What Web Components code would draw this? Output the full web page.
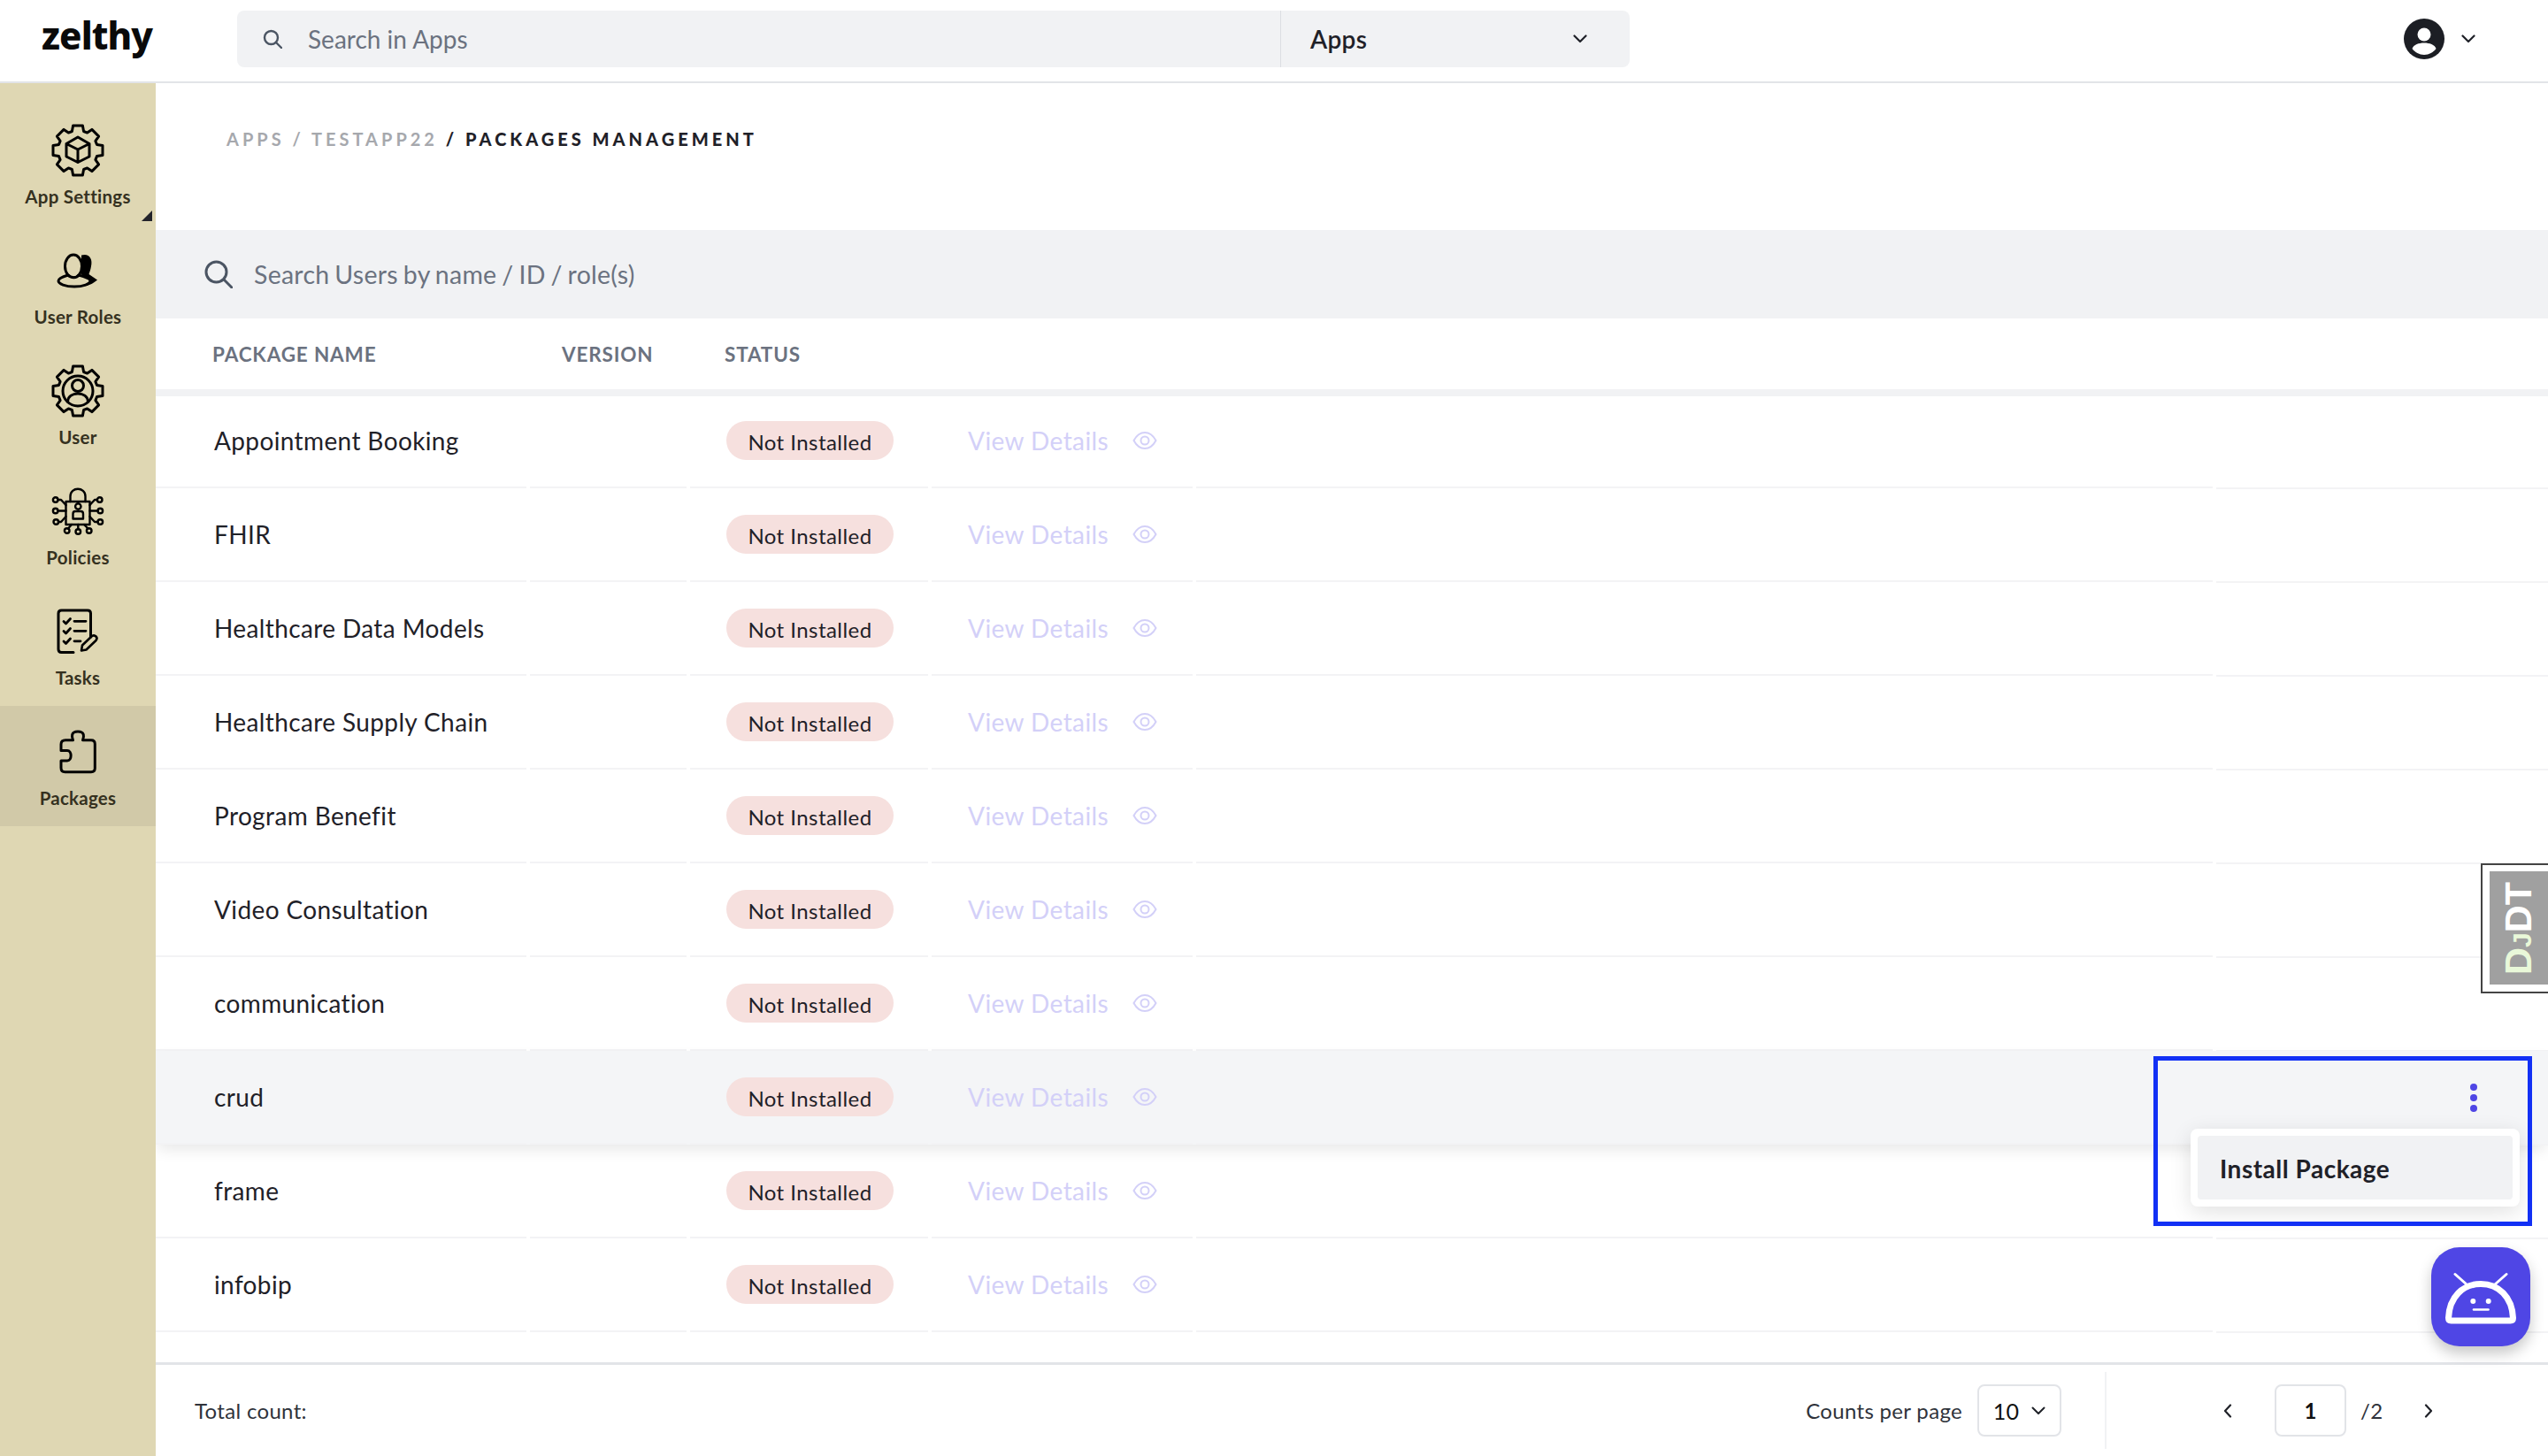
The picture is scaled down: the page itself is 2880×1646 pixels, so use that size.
<!DOCTYPE html>
<html lang="en">
<head>
<meta charset="utf-8">
<title>Packages Management</title>
<style>
  html, body { margin: 0; padding: 0; background: #fff; }
  body { font-family: Lato, "Liberation Sans", sans-serif; }
</style>
</head>
<body>
<z-app></z-app>
<script>
// 8 tooth gear outline, used by App Settings and User
function gearPath(cx, cy, R, r) {
  const pts = [];
  for (let i = 0; i < 8; i++) {
    const a = -90 + i * 45;
    [[-17, r], [-11, R], [11, R], [17, r]].forEach(([d, rad]) => {
      const t = (a + d) * Math.PI / 180;
      pts.push((cx + rad * Math.cos(t)).toFixed(1) + ' ' + (cy + rad * Math.sin(t)).toFixed(1));
    });
  }
  return 'M' + pts.join('L') + 'Z';
}

const ICONS = {
  app: `<path d="${gearPath(32, 32, 28.5, 22.5)}"/><path d="M32 17 45 24.5V39L32 45.5 19 39V24.5ZM19 24.5 32 31 45 24.5M32 31V45.5"/>`,
  roles: `<path fill="#000" stroke="none" d="M36 14.5C45 12 49 19 47 27 46.500 31 45 34 44.500 36L54 42.500C50 46 46 48 42 49L36 36Z"/><ellipse cx="27" cy="27" rx="9.500" ry="13"/><path fill="#dfd7b3" d="M21 37C14 39 10 41 10 43.500 10 47 18 50 28 50 38 50 46 47 46 43.500 46 41 40 39 33 37 31 40.500 24 40.500 21 37Z"/>`,
  user: `<path d="${gearPath(32, 32, 28.5, 22.5)}"/><circle cx="32" cy="32" r="17"/><circle cx="32" cy="26" r="6.500"/><path d="M20.500 44C21 38 26 35 32 35S43 38 43.500 44"/>`,
  policies: `<g stroke-width="2.400"><rect x="18.500" y="21" width="27" height="26"/><path d="M23.500 21V15C23.500 4 40.500 4 40.500 15V21"/><circle cx="32.300" cy="26.500" r="3.200"/><path d="M26.500 40.500V35Q26.500 32 29 32H35.500Q38 32 38 35V40.500Z"/>
    <circle cx="6.700" cy="19" r="2.800"/><circle cx="6.700" cy="31.500" r="2.800"/><circle cx="7.300" cy="44" r="2.800"/><circle cx="56.700" cy="19" r="2.800"/><circle cx="57.300" cy="31.500" r="2.800"/><circle cx="57.300" cy="44" r="2.800"/><circle cx="19.700" cy="54" r="2.800"/><circle cx="32.300" cy="55" r="2.800"/><circle cx="44.700" cy="54" r="2.800"/>
    <path d="M9.500 19H13L18.500 25M9.500 31.500H18.500M10 44H13L18.500 38M54 19H51L45.500 25M54.500 31.500H45.500M54.500 44H51L45.500 38M21 51.500 25 47M32.300 52V47M43.500 51.500 39 47"/></g>`,
  tasks: `<path d="M27 55.500H13.500Q10 55.500 10 52V11.500Q10 8 13.500 8H43Q46.500 8 46.500 11.500V38"/><path stroke-width="2.800" d="M16 20.500 18.500 23 23.500 17.500M16 31.500 18.500 34 23.500 28.500M16 43 18.500 45.500 23.500 40M28 20.300H41M28 31.300H41M28 42.800H35"/><path stroke-width="2.600" d="M36 53.500 37 47.500 48 37Q50.500 35.500 52.500 37.500 54.500 39.500 52.500 42L41.500 52.500Z"/>`,
  packages: `<path d="M18 18.700H26.500C25 15 24 9 32 9S39 15 37.500 18.700H47Q51.300 18.700 51.300 23V50.500Q51.300 54.700 47 54.700H17.500Q13 54.700 13 50V42H20C25.500 42 25.500 30.500 20 30.500H13V23.500Q13 18.700 18 18.700Z"/>`
};

class ZIcon extends HTMLElement {
  connectedCallback() {
    const name = this.getAttribute('name');
    this.attachShadow({ mode: 'open' }).innerHTML = `
      <style>
        :host { display: block; width: 64px; height: 64px; }
        svg { display: block; fill: none; stroke: #000; stroke-width: 3; stroke-linejoin: round; stroke-linecap: round; }
      </style>
      <svg width="64" height="64" viewBox="0 0 64 64">${ICONS[name]}</svg>`;
  }
}
customElements.define('z-icon', ZIcon);

class ZNavItem extends HTMLElement {
  connectedCallback() {
    this.attachShadow({ mode: 'open' }).innerHTML = `
      <style>
        :host {
          display: flex; flex-direction: column; align-items: center;
          height: 136px; box-sizing: border-box; padding-top: 20px;
          position: relative; color: #35311f;
          font: 700 20.500px/28px Lato, sans-serif; letter-spacing: 0.25px;
        }
        :host([active]) { background: #d1c9a8; }
        .label { margin-top: 6px; white-space: nowrap; }
        .corner {
          display: none; position: absolute; right: 4px; bottom: 4px; width: 0; height: 0;
          border-left: 12px solid transparent; border-bottom: 12px solid #23242b;
        }
        :host([corner]) .corner { display: block; }
      </style>
      <slot name="icon"></slot>
      <div class="label"><slot></slot></div>
      <div class="corner"></div>`;
  }
}
customElements.define('z-nav-item', ZNavItem);

class ZSidebar extends HTMLElement {
  connectedCallback() {
    this.attachShadow({ mode: 'open' }).innerHTML = `
      <style>
        :host { display: block; width: 176px; flex: none; box-sizing: border-box; padding-top: 24px; background: #dfd7b3; }
      </style>
      <z-nav-item corner><z-icon slot="icon" name="app"></z-icon>App Settings</z-nav-item>
      <z-nav-item><z-icon slot="icon" name="roles"></z-icon>User Roles</z-nav-item>
      <z-nav-item><z-icon slot="icon" name="user"></z-icon>User</z-nav-item>
      <z-nav-item><z-icon slot="icon" name="policies"></z-icon>Policies</z-nav-item>
      <z-nav-item><z-icon slot="icon" name="tasks"></z-icon>Tasks</z-nav-item>
      <z-nav-item active><z-icon slot="icon" name="packages"></z-icon>Packages</z-nav-item>`;
  }
}
customElements.define('z-sidebar', ZSidebar);

class ZTopbar extends HTMLElement {
  connectedCallback() {
    this.attachShadow({ mode: 'open' }).innerHTML = `
      <style>
        :host {
          display: flex; align-items: flex-start; height: 94px; flex: none; box-sizing: border-box;
          border-bottom: 2px solid #e2e4e8; background: #fff; padding-top: 12px;
        }
        .logo {
          width: 220px; flex: none; padding-left: 47px; box-sizing: border-box;
          font: 800 42px/60px "Noto Sans", sans-serif; color: #0a0a0a; letter-spacing: -0.9px;
          margin-top: -2px; height: 64px;
        }
        .bar {
          display: flex; width: 1574px; height: 64px; margin-left: 48px;
          background: #f1f2f4; border-radius: 8px; flex: none;
        }
        .search { display: flex; align-items: center; width: 1179px; flex: none; box-sizing: border-box; padding-left: 29px; gap: 29px; font-size: 28px; color: #6b7280; }
        .apps {
          flex: 1; display: flex; align-items: center; justify-content: space-between; box-sizing: border-box;
          border-left: 1px solid #dcdee2; padding: 0 48px 0 33px; font-size: 28px; font-weight: 600; letter-spacing: 0.3px; color: #1f2128;
        }
        .user { display: flex; align-items: center; gap: 19px; margin-left: auto; margin-right: 82px; height: 64px; }
        svg { display: block; }
      </style>
      <div class="logo">zelthy</div>
      <div class="bar">
        <div class="search">
          <svg width="22" height="22" viewBox="0 0 22 22" fill="none" stroke="#4b5563" stroke-width="2.400" stroke-linecap="round"><circle cx="9.500" cy="9.500" r="7.500"/><path d="M15 15 21 21"/></svg>
          <span>Search in Apps</span>
        </div>
        <div class="apps">
          <span>Apps</span>
          <svg width="16" height="10" viewBox="0 0 16 10" fill="none" stroke="#1f2128" stroke-width="2.200" stroke-linecap="round" stroke-linejoin="round"><path d="M1.500 1.500 8 8 14.500 1.500"/></svg>
        </div>
      </div>
      <div class="user">
        <svg width="46" height="46" viewBox="0 0 46 46"><circle cx="23" cy="23" r="23" fill="#1c1e24"/><circle cx="23" cy="18" r="7.500" fill="#fff"/><path fill="#fff" d="M9.500 34C11 29.500 17 27.500 23 27.500S35 29.500 36.500 34C33.500 38 28.500 41 23 41S12.500 38 9.500 34Z"/></svg>
        <svg width="16" height="10" viewBox="0 0 16 10" fill="none" stroke="#1f2128" stroke-width="2.200" stroke-linecap="round" stroke-linejoin="round"><path d="M1.500 1.500 8 8 14.500 1.500"/></svg>
      </div>`;
  }
}
customElements.define('z-topbar', ZTopbar);

const COLUMNS = '419px 177px 269px 295px 1149px 1fr';

class ZRow extends HTMLElement {
  connectedCallback() {
    this.attachShadow({ mode: 'open' }).innerHTML = `
      <style>
        :host {
          display: grid; grid-template-columns: ${COLUMNS}; column-gap: 4px;
          height: 106px; position: relative;
          font-variant-ligatures: none;
        }
        :host([active]) {
          z-index: 2; background: #f4f5f7;
          box-shadow: 0 8px 16px -2px rgba(0, 0, 0, 0.09);
        }
        .cell {
          display: flex; align-items: center; box-sizing: border-box;
          border-bottom: 2px solid #f3f3f5;
        }
        .cell:last-child { margin-bottom: -1px; position: relative; justify-content: flex-end; padding-right: 80px; }
        .name { padding-left: 66px; font-size: 28px; letter-spacing: 0.38px; color: #1f2128; white-space: nowrap; }
        .pill {
          margin-left: 41px; height: 44px; width: 189px; border-radius: 22px;
          background: #f6e0de; color: #1f2128; font-size: 24px; letter-spacing: 0.45px; line-height: 47px; text-align: center;
        }
        .view { display: flex; align-items: center; gap: 27px; padding-left: 41px; color: #d3d0f8; font-size: 28px; letter-spacing: 0.42px; white-space: nowrap; }
        .dots { display: none; flex-direction: column; gap: 4px; margin-top: 0; }
        .dots i { display: block; width: 8px; height: 8px; border-radius: 50%; background: #4f46e5; }
        .menu {
          display: none; position: absolute; right: 32px; top: 88px; width: 372px; height: 88px;
          box-sizing: border-box; padding: 8px; background: #fff; border-radius: 8px;
          box-shadow: 0 6px 24px rgba(0, 0, 0, 0.12);
        }
        .menu div {
          height: 72px; line-height: 74px; padding-left: 25px; border-radius: 4px;
          background: #f1f2f4; color: #1f2128; font-size: 28px; font-weight: 700; letter-spacing: 0.5px;
        }
        :host([active]) .dots { display: flex; }
        :host([active]) .menu { display: block; }
        svg { display: block; }
      </style>
      <div class="cell name"><slot></slot></div>
      <div class="cell"></div>
      <div class="cell"><span class="pill">Not Installed</span></div>
      <div class="cell view">
        <span>View Details</span>
        <svg width="28" height="22" viewBox="0 0 28 22" fill="none" stroke="#d3d0f8" stroke-width="2"><path d="M1.500 11C5 4.500 9 2 14 2S23 4.500 26.500 11C23 17.500 19 20 14 20S5 17.500 1.500 11Z"/><circle cx="14" cy="11" r="4.500"/></svg>
      </div>
      <div class="cell"></div>
      <div class="cell">
        <div class="dots"><i></i><i></i><i></i></div>
        <div class="menu"><div>Install Package</div></div>
      </div>`;
  }
}
customElements.define('z-row', ZRow);

class ZTable extends HTMLElement {
  connectedCallback() {
    const names = ['Appointment Booking', 'FHIR', 'Healthcare Data Models', 'Healthcare Supply Chain', 'Program Benefit', 'Video Consultation', 'communication', 'crud', 'frame', 'infobip'];
    this.attachShadow({ mode: 'open' }).innerHTML = `
      <style>
        :host { display: flex; flex-direction: column; flex: 1; min-height: 0; }
        .head {
          display: grid; grid-template-columns: 395px 184px 1fr; align-items: center; flex: none;
          height: 88px; box-sizing: border-box; border-bottom: 8px solid #f1f2f4;
          padding-left: 64px; font-size: 22.500px; font-weight: 700; letter-spacing: 0.85px; color: #6b7280;
        }
        .rows { margin-top: -2px; flex: 1; }
      </style>
      <div class="head"><span>PACKAGE NAME</span><span>VERSION</span><span>STATUS</span></div>
      <div class="rows">
        ${names.map((n) => `<z-row ${n === 'crud' ? 'active' : ''}>${n}</z-row>`).join('')}
      </div>`;
  }
}
customElements.define('z-table', ZTable);

class ZFooter extends HTMLElement {
  connectedCallback() {
    const chev = (d) => `<svg width="10" height="16" viewBox="0 0 10 16" fill="none" stroke="#1f2128" stroke-width="2.200" stroke-linecap="round" stroke-linejoin="round"><path d="${d}"/></svg>`;
    this.attachShadow({ mode: 'open' }).innerHTML = `
      <style>
        :host {
          display: flex; align-items: center; height: 106px; flex: none; box-sizing: border-box;
          border-top: 3px solid #e2e4e8; padding-left: 44px; font-size: 24px; letter-spacing: 0.32px; color: #2f333b;
        }
        .counts { margin-left: auto; display: flex; align-items: center; gap: 18px; }
        .box {
          display: flex; align-items: center; justify-content: center; height: 59px; box-sizing: border-box;
          border: 2px solid #e2e4e8; border-radius: 8px; color: #111;
        }
        .select { width: 95px; gap: 14px; font-size: 25px; margin-left: -1px; }
        .divider { width: 2px; height: 87px; background: #f1f2f4; margin-left: 49px; }
        .pager { width: 499px; box-sizing: border-box; display: flex; align-items: center; padding-left: 132px; }
        .page { width: 81px; font-weight: 700; margin-left: 48px; }
        .total { margin-left: 16px; width: 72px; }
        svg { display: block; }
      </style>
      <span>Total count:</span>
      <div class="counts">
        <span>Counts per page</span>
        <div class="box select"><span>10</span><svg width="16" height="10" viewBox="0 0 16 10" fill="none" stroke="#1f2128" stroke-width="2" stroke-linecap="round" stroke-linejoin="round"><path d="M1.500 1.500 8 8 14.500 1.500"/></svg></div>
      </div>
      <div class="divider"></div>
      <div class="pager">
        ${chev('M8 1.500 2 8 8 14.500')}
        <div class="box page">1</div>
        <span class="total">/2</span>
        ${chev('M2 1.500 8 8 2 14.500')}
      </div>`;
  }
}
customElements.define('z-footer', ZFooter);

class ZMain extends HTMLElement {
  connectedCallback() {
    this.attachShadow({ mode: 'open' }).innerHTML = `
      <style>
        :host { display: flex; flex-direction: column; flex: 1; min-width: 0; overflow: hidden; }
        .crumbs {
          height: 166px; flex: none; box-sizing: border-box; padding: 49px 0 0 80px;
          font-size: 20px; line-height: 28px; font-weight: 700; letter-spacing: 4px; color: #a6a8ad; white-space: nowrap;
        }
        .crumbs b { color: #1f2128; }
        .search {
          display: flex; align-items: center; gap: 24px; height: 100px; flex: none; box-sizing: border-box;
          padding-left: 55px; background: #f1f2f4; font-size: 28.500px; letter-spacing: 0.25px; word-spacing: -1.6px; color: #6b7280;
        }
        svg { display: block; }
      </style>
      <div class="crumbs">APPS / TESTAPP22 <b>/ PACKAGES MANAGEMENT</b></div>
      <div class="search">
        <svg width="32" height="32" viewBox="0 0 32 32" fill="none" stroke="#4b5563" stroke-width="3" stroke-linecap="round"><circle cx="13.500" cy="13.500" r="11.500"/><path d="M22 22 31 31"/></svg>
        <span>Search Users by name / ID / role(s)</span>
      </div>
      <z-table></z-table>
      <z-footer></z-footer>`;
  }
}
customElements.define('z-main', ZMain);

// the toolbar handle, the chat button and the blue marker lie over the page
class ZDebugHandle extends HTMLElement {
  connectedCallback() {
    this.attachShadow({ mode: 'open' }).innerHTML = `
      <style>
        :host {
          position: absolute; right: 0; top: 976px; width: 76px; height: 147px; box-sizing: border-box;
          border: 2px solid #444; border-right: 0; background: #fff; padding: 7px 0 8px 8px; z-index: 5;
        }
        .inner {
          height: 100%; background: #a0a0a0; display: flex; align-items: center; justify-content: center;
        }
        .txt {
          display: block; flex: none; transform: rotate(-90deg); white-space: nowrap;
          font: 700 43px/1 "Liberation Sans", sans-serif; color: #fff;
        }
        .g { color: #e9f8d9; }
        .j { font-size: 30px; }
      </style>
      <div class="inner"><span class="txt"><span class="g">D<span class="j">J</span></span>DT</span></div>`;
  }
}
customElements.define('z-debug-handle', ZDebugHandle);

class ZBotButton extends HTMLElement {
  connectedCallback() {
    this.attachShadow({ mode: 'open' }).innerHTML = `
      <style>
        :host {
          position: absolute; left: 2748px; top: 1410px; width: 112px; height: 112px; border-radius: 32px;
          background: #4f46e5; box-shadow: 0 8px 16px rgba(0, 0, 0, 0.22); z-index: 5;
        }
        svg { display: block; }
      </style>
      <svg width="112" height="112" viewBox="0 0 112 112" fill="none" stroke="#fff" stroke-linecap="round" stroke-linejoin="round">
        <path stroke-width="3" d="M27 30.500 40 42M85 30.500 72 42"/>
        <path stroke-width="7" d="M19.500 80C20.500 56 36 41.500 56 41.500S91.500 56 92.500 80Q92.500 83 89.500 83H22.500Q19.500 83 19.500 80Z"/>
        <circle cx="47.300" cy="61" r="3" fill="#fff" stroke="none"/><circle cx="64.700" cy="61" r="3" fill="#fff" stroke="none"/>
        <path stroke-width="2.600" d="M48 70.500H64.500"/>
      </svg>`;
  }
}
customElements.define('z-bot-button', ZBotButton);

class ZApp extends HTMLElement {
  connectedCallback() {
    this.attachShadow({ mode: 'open' }).innerHTML = `
      <style>
        :host {
          display: flex; flex-direction: column; position: relative; width: 2880px; height: 1646px; overflow: hidden;
          background: #fff; font-family: Lato, "Liberation Sans", sans-serif;
        }
        .body { display: flex; flex: 1; min-height: 0; }
        .marker {
          position: absolute; left: 2434px; top: 1194px; width: 428px; height: 192px; box-sizing: border-box;
          border: 5px solid #1230f5; z-index: 6; pointer-events: none;
        }
      </style>
      <z-topbar></z-topbar>
      <div class="body">
        <z-sidebar></z-sidebar>
        <z-main></z-main>
      </div>
      <z-debug-handle></z-debug-handle>
      <z-bot-button></z-bot-button>
      <div class="marker"></div>`;
  }
}
customElements.define('z-app', ZApp);
</script>
</body>
</html>
